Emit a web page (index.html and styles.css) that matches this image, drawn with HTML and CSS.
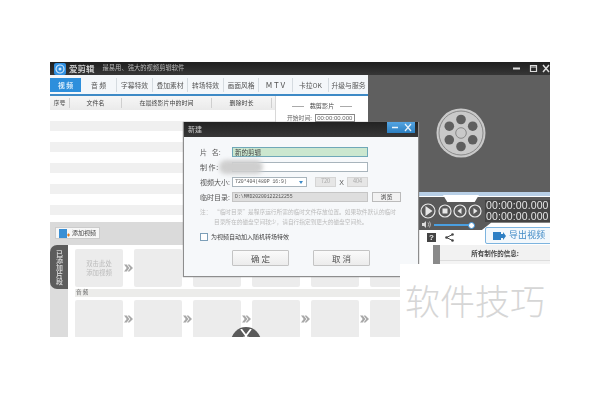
FILE: index.html
```html
<!DOCTYPE html>
<html lang="zh">
<head>
<meta charset="utf-8">
<title>爱剪辑</title>
<link rel="stylesheet" href="styles.css">
</head>
<body>
<svg class="defs" width="0" height="0">
  <symbol id="chev" viewBox="0 0 10 8"><path d="M0 0h3l3 4-3 4H0l3-4zM4 0h2l4 4-4 4H4l3-4z" fill="#a8a8a8"/></symbol>
</svg>
<div class="app">
  <header class="titlebar">
    <svg class="logo" viewBox="0 0 12 12"><rect width="12" height="12" rx="2" fill="#2f8fe0"/><circle cx="6" cy="6" r="4" fill="none" stroke="#cfe6fa" stroke-width="1.2"/><circle cx="6" cy="6" r="1.5" fill="#cfe6fa"/></svg>
    <span class="brand">爱剪辑</span>
    <span class="slogan">最易用、强大的视频剪辑软件</span>
    <span class="winbtns">
      <svg viewBox="0 0 38 9" width="38" height="9"><path d="M1 4.5h7" stroke="#ddd" stroke-width="2"/><path d="M18.500 1.500h6v6h-6zM18.500 3h6" fill="none" stroke="#ddd" stroke-width="1.200"/><path d="M31 1l6 7M37 1l-6 7" stroke="#ddd" stroke-width="1.500"/></svg>
    </span>
  </header>
  <main class="workspace">
    <section class="editor">
      <nav class="tabs">
        <span class="tab active">视 频</span><span class="tab">音 频</span><span class="tab">字幕特效</span><span class="tab">叠加素材</span><span class="tab">转场特效</span><span class="tab">画面风格</span><span class="tab mtv">M T V</span><span class="tab">卡拉OK</span><span class="tab">升级与服务</span>
      </nav>
      <div class="panes">
        <div class="list">
          <div class="listhead"><span class="c1">序号</span><span class="c2">文件名</span><span class="c3">在最终影片中的时间</span><span class="c4">删除时长</span></div>
          <div class="listbody"></div>
        </div>
        <aside class="trim">
          <div class="trimtitle"><i></i>裁剪影片<i></i></div>
          <div class="trimrow">开始时间: <span class="timefield">00:00:00.000</span></div>
        </aside>
      </div>
    </section>
    <section class="preview">
      <svg class="reel" viewBox="0 0 50 50" width="50" height="50">
        <circle cx="25" cy="25" r="24.500" fill="#c9c9c9"/>
        <circle cx="25" cy="25" r="22" fill="none" stroke="#777" stroke-width="0.800"/>
        <g fill="#5f5f5f"><circle cx="25" cy="11.500" r="4.800"/><circle cx="36.700" cy="18.200" r="4.800"/><circle cx="36.700" cy="31.800" r="4.800"/><circle cx="25" cy="38.500" r="4.800"/><circle cx="13.300" cy="31.800" r="4.800"/><circle cx="13.300" cy="18.200" r="4.800"/></g>
        <circle cx="25" cy="25" r="5.300" fill="none" stroke="#777" stroke-width="0.800"/>
      </svg>
    </section>
    <section class="player">
      <div class="band"><span class="notch"></span></div>
      <div class="controls">
        <div class="ctlrow">
          <svg viewBox="0 0 64 18" width="64" height="18" class="ctlicons">
            <g fill="none" stroke="#e8e8e8" stroke-width="1.200"><circle cx="8" cy="9" r="7"/><circle cx="25" cy="9" r="6"/><circle cx="40" cy="9" r="6"/><circle cx="55" cy="9" r="6"/></g>
            <g fill="#e8e8e8"><path d="M5.500 4l7 5-7 5zM22.500 6.500h5v5h-5zM41.500 6v6l-4-3zM53.500 6v6l4-3z"/></g>
          </svg>
          <div class="clock">00:00:00.000<br>00:00:00.000</div>
        </div>
        <div class="volume"><svg viewBox="0 0 9 7" width="9" height="7"><path d="M0 2h2l2-2v7L2 5H0z" fill="#ddd"/><path d="M6 1.500q1.500 2 0 4M7.500 .5q2 3 0 6" fill="none" stroke="#ddd" stroke-width=".7"/></svg><span class="slider"></span></div>
      </div>
      <div class="toolrow">
        <span class="help">?</span>
        <svg viewBox="0 0 9 9" width="9" height="9"><path d="M7.500 1.500L1.500 4.500l6 3" fill="none" stroke="#444" stroke-width="1"/><g fill="#444"><circle cx="7.500" cy="1.500" r="1.300"/><circle cx="1.500" cy="4.500" r="1.300"/><circle cx="7.500" cy="7.500" r="1.300"/></g></svg>
        <span class="export"><svg viewBox="0 0 13 8" width="13" height="8"><rect width="8" height="8" fill="#2d7fc4"/><path d="M8 2h2V0l3 4-3 4V6H8z" fill="#2d7fc4"/></svg>导出视频</span>
      </div>
      <div class="info">
        <div class="infopanel"><div class="infotitle">所有制作的信息:</div></div>
      </div>
    </section>
    <section class="timeline">
      <div class="addbar"><span class="addbtn"><svg viewBox="0 0 11 9" width="11" height="9"><rect width="8" height="9" fill="#3a8fd4"/><path d="M8 6h3M9.500 4.500v3" stroke="#e07b20" stroke-width="1.200"/></svg>添加视频</span></div>
      <div class="clips">
        <div class="cliptab">已添加片段</div>
        <div class="tracks">
          <div class="track">
            <div class="thumb hint">双击此处<br>添加视频</div><svg class="chev"><use href="#chev"/></svg>
            <div class="thumb"></div><svg class="chev"><use href="#chev"/></svg>
            <div class="thumb"></div><svg class="chev"><use href="#chev"/></svg>
            <div class="thumb"></div><svg class="chev"><use href="#chev"/></svg>
            <div class="thumb"></div><svg class="chev"><use href="#chev"/></svg>
            <div class="thumb"></div>
          </div>
          <div class="audiobar">音 频</div>
          <div class="track">
            <div class="thumb"></div><svg class="chev"><use href="#chev"/></svg>
            <div class="thumb"></div><svg class="chev"><use href="#chev"/></svg>
            <div class="thumb"></div><svg class="chev"><use href="#chev"/></svg>
            <div class="thumb"></div><svg class="chev"><use href="#chev"/></svg>
            <div class="thumb"></div><svg class="chev"><use href="#chev"/></svg>
            <div class="thumb"></div>
          </div>
        </div>
        <div class="scissor"><svg viewBox="0 0 14 12" width="14" height="12"><path d="M2 0l6 8M12 0L6 8" stroke="#fff" stroke-width="1.800"/><circle cx="4.500" cy="10" r="1.800" fill="none" stroke="#fff"/><circle cx="9.500" cy="10" r="1.800" fill="none" stroke="#fff"/></svg></div>
      </div>
    </section>
  </main>

  <div class="dialog">
    <div class="dlgtitle"><span>新建</span>
      <span class="dlgbtns"><svg viewBox="0 0 28 11" width="28" height="11"><path d="M5 5.500h6" stroke="#e8f3fb" stroke-width="1.500"/><path d="M18 2l6 7M24 2l-6 7" stroke="#e8f3fb" stroke-width="1.200"/></svg></span>
    </div>
    <div class="dlgbody">
      <div class="field"><label>片 &nbsp; 名:</label><span class="input name">新的剪辑</span></div>
      <div class="field"><label>制 作：</label><span class="input maker"><i class="smudge"></i></span></div>
      <div class="field">
        <label>视频大小:</label>
        <span class="input select">720*404(480P 16:9)<b class="arrow"></b></span>
        <span class="input dim">720</span><span class="times">X</span><span class="input dim">404</span>
      </div>
      <div class="field">
        <label>临时目录:</label>
        <span class="input temp">D:\MMD20200122212255</span>
        <span class="browse">浏览</span>
      </div>
      <p class="note"><span>注：</span><span>“临时目录”是程序运行所需的临时文件存放位置。如果软件默认的临时<br>目录所在的磁盘空间较少，请自行指定到更大的磁盘空间处。</span></p>
      <div class="check"><span class="box"></span>为视频自动加入随机转场特效</div>
      <div class="actions"><span class="btn">确 定</span><span class="btn">取 消</span></div>
    </div>
  </div>
</div>
<div class="watermark">软件技巧</div>
</body>
</html>
```
FILE: styles.css
```css
* { box-sizing: border-box; }
html, body { margin: 0; height: 100%; background: #fff; overflow: hidden; }
body { padding: 62px 0 0 50px; font-family: "Noto Sans CJK SC", "Liberation Sans", sans-serif; color: #444; font-size: 8px; line-height: 1; }
.defs { position: absolute; }
.app { position: relative; width: 500px; height: 275px; background: #fff; overflow: hidden; filter: blur(.45px); }

.titlebar { height: 13px; display: flex; align-items: center; background: linear-gradient(#1f1f1f, #363636); color: #d5d5d5; padding: 0 0 0 4px; }
.logo { width: 12px; height: 12px; margin-right: 3px; }
.brand { font-size: 8.500px; font-weight: 700; margin-right: 8px; color: #ccc; }
.slogan { font-size: 6.300px; color: #bbb; }
.winbtns { margin-left: auto; display: flex; }

.workspace { display: grid; grid-template-columns: 318px 51px 131px; grid-template-rows: 117px 30px 115px; height: 262px; }
.editor { grid-column: 1; grid-row: 1 / 3; display: flex; flex-direction: column; overflow: hidden; }
.preview { grid-column: 2 / 4; grid-row: 1; background: #5f5f5f; display: flex; justify-content: flex-end; padding: 33px 64px 0 0; }
.reel { display: block; }
.player { grid-column: 3; grid-row: 2 / 4; display: flex; flex-direction: column; position: relative; }
.timeline { grid-column: 1 / 3; grid-row: 3; display: flex; flex-direction: column; overflow: hidden; }

.tabs { display: grid; grid-template-columns: 31px 36px 36px 35px 36px 35px 34px 36px 39px; height: 19px; padding: 3px 0 2px; background: #f4f7fa; flex: none; }
.tab { display: flex; align-items: center; justify-content: center; font-size: 6.800px; color: #555; border-right: 1px solid #d5dbe0; white-space: nowrap; }
.tab:last-child, .tab.active { border-right: 0; }
.tab.active { background: #2d8fdc; color: #dceefb; font-weight: 700; }
.tab.mtv { font-size: 8px; }

.panes { flex: 1; display: flex; border-top: 2px solid #3e8ac6; min-height: 0; }
.list { width: 225px; display: flex; flex-direction: column; }
.listhead { height: 14px; flex: none; display: grid; grid-template-columns: 20px 52px 90px 60px; background: linear-gradient(#f6f6f6, #eaeaea); font-size: 6px; }
.listhead span { display: flex; align-items: center; justify-content: center; border-right: 1px solid #cfcfcf; margin: 2px 0; }
.listbody { flex: 1; background: repeating-linear-gradient(#fff 0 11px, #f0f0f0 11px 21px); }
.trim { flex: 1; background: #fff; border-left: 1px solid #d8d8d8; padding-top: 6px; }
.trimtitle { display: flex; align-items: center; justify-content: center; gap: 6px; font-size: 6.200px; height: 9px; }
.trimtitle i { width: 12px; height: 1px; background: #aaa; }
.trimrow { display: flex; align-items: center; gap: 3px; margin: 3px 0 0 11px; font-size: 5.800px; color: #666; }
.timefield { width: 40px; height: 8px; border: 1px solid #888; font: 6px "Liberation Sans", sans-serif; display: flex; align-items: center; justify-content: center; }

.band { height: 5px; background: linear-gradient(#b8cfe6 70%, #fff 70%); position: relative; flex: none; }
.notch { position: absolute; left: 24px; top: 3px; width: 36px; height: 7px; background: #fff; clip-path: polygon(0 0, 100% 0, 88% 100%, 12% 100%); z-index: 1; }
.controls { height: 33px; background: #5a5a5a; clip-path: polygon(0 0, 100% 0, 100% 78%, 55% 78%, 48% 100%, 0 100%); flex: none; padding-top: 3px; }
.ctlrow { display: flex; align-items: flex-start; padding-left: 1px; }
.ctlicons { margin: 2px 0 0 0; flex: none; }
.clock { margin-left: 1px; width: 65px; height: 22px; background: #444; color: #e4e4e4; font: 10.500px/11px "Liberation Sans", sans-serif; letter-spacing: .1px; white-space: nowrap; padding-left: 1px; }
.volume { display: flex; align-items: center; gap: 3px; margin: -1px 0 0 3px; }
.slider { position: relative; width: 39px; height: 2px; background: #4a9fe0; }
.slider::after { content: ""; position: absolute; right: -2px; top: -1.500px; width: 5px; height: 5px; border-radius: 50%; background: #fff; border: 1px solid #3a8fd4; }
.toolrow { height: 15px; display: flex; align-items: center; flex: none; padding-left: 8px; gap: 9px; position: relative; }
.help { width: 9px; height: 9px; background: #444; color: #eee; font: 700 8px/9px "Liberation Sans", sans-serif; text-align: center; }
.export { position: absolute; left: 66px; top: -3px; width: 70px; height: 17px; background: #f3f8fc; border: 1px solid #7db4df; border-radius: 2px; color: #3f8ac6; font-size: 8.800px; letter-spacing: .3px; display: flex; align-items: center; gap: 3px; padding-left: 7px; white-space: nowrap; }
.info { flex: 1; padding-left: 14px; background: #fff; }
.infopanel { height: 100%; border-left: 7px solid #8a8a8a; background: #f4f4f4; }
.infotitle { height: 16px; background: #f2f2f2; border-bottom: 1px solid #ddd; font-size: 6.500px; font-weight: 700; display: flex; align-items: center; justify-content: center; padding-top: 2px; }

.addbar { height: 23px; background: #dadada; flex: none; padding: 5px 0 0 5px; }
.addbtn { display: inline-flex; align-items: center; gap: 2px; height: 12px; width: 45px; background: #f7f7f7; border: 1px solid #ccc; font-size: 6px; padding-left: 3px; white-space: nowrap; }
.clips { flex: 1; display: flex; position: relative; overflow: hidden; }
.cliptab { position: absolute; left: 0; top: 0; width: 18px; height: 44px; background: #5c5c5c; color: #ccc; border-radius: 7px 0 0 7px; writing-mode: vertical-rl; font-size: 7px; font-weight: 700; display: flex; align-items: center; justify-content: center; z-index: 1; }
.tracks { margin-left: 18px; flex: 1; padding: 4px 0 0 7px; background: #fff; min-width: 0; position: relative; }
.clips::before { content: ""; position: absolute; left: 0; top: 0; bottom: 0; width: 18px; background: #dcdcdc; }
.track { display: flex; align-items: center; height: 38px; }
.thumb { width: 48px; height: 38px; flex: none; background: #ececec; border-radius: 2px; display: flex; align-items: center; justify-content: center; text-align: center; color: #bbb; font-size: 6.400px; line-height: 9.500px; }
.chev { width: 9px; height: 8px; margin: 0 1px; flex: none; }
.audiobar { height: 8px; margin: 2px 0 3px; background: #ececea; font-size: 5.500px; color: #666; padding-left: 1px; display: flex; align-items: center; }
.scissor { position: absolute; left: 181px; top: 82px; width: 30px; height: 30px; border-radius: 50%; background: #5a5a5a; display: flex; justify-content: center; padding-top: 2px; }

.dialog { position: absolute; left: 133px; top: 60px; width: 236px; height: 155px; background: #f6f8fa; border: 1px solid #8d8d8d; border-top: 0; box-shadow: 0 0 1px #777; display: flex; flex-direction: column; }
.dlgtitle { height: 15px; background: linear-gradient(#222, #383838); color: #ccc; font-size: 7px; display: flex; align-items: center; padding-left: 4px; flex: none; }
.dlgbtns { margin-left: auto; margin-right: 3px; align-self: flex-start; width: 28px; height: 11px; background: linear-gradient(#54a4e2, #2c7fc0); display: flex; }
.dlgbody { padding: 10px 0 0 16px; flex: 1; }
.field { display: flex; align-items: center; height: 10px; margin-bottom: 5px; }
.field label { width: 32px; flex: none; font-size: 7px; color: #555; white-space: nowrap; }
.input { height: 10px; display: flex; align-items: center; border: 1px solid #a8b4bc; background: #fff; font-size: 6.500px; padding-left: 2px; white-space: nowrap; }
.name { width: 136px; background: #cbe7cf; border-color: #6fa8b8; color: #444; }
.maker { width: 136px; position: relative; }
.smudge { position: absolute; left: -14px; top: -3px; width: 44px; height: 14px; background: #cfcfcf; border-radius: 7px; filter: blur(2px); }
.select { width: 75px; margin-right: 8px; position: relative; font-family: "Liberation Mono", monospace; font-size: 4.800px; color: #555; }
.arrow { position: absolute; right: 3px; top: 3px; border: 2.500px solid transparent; border-top: 3px solid #3c8ac8; }
.dim { width: 21px; background: #e6e6e6; border-color: #d5d5d5; color: #aaa; font-size: 5.500px; justify-content: center; padding: 0; }
.times { width: 11px; text-align: center; font: 7px "Liberation Sans", sans-serif; color: #555; }
.temp { width: 136px; background: #dedede; border-color: #c5c5c5; color: #555; font-family: "Liberation Mono", monospace; font-size: 4.800px; }
.browse { width: 29px; height: 10px; margin-left: 4px; background: #f2f2f2; border: 1px solid #bbb; display: flex; align-items: center; justify-content: center; font-size: 6px; }
.note { margin: 0; display: flex; font-size: 5.700px; line-height: 10px; color: #bcbcbc; white-space: nowrap; }
.note span:first-child { width: 14px; flex: none; }
.check { display: flex; align-items: center; gap: 3px; margin-top: 6px; font-size: 6px; color: #444; white-space: nowrap; height: 8px; }
.box { width: 8px; height: 8px; border: 1px solid #7d9fb8; background: #fff; }
.actions { display: flex; gap: 24px; margin: 9px 0 0 32px; }
.btn { width: 57px; height: 16px; background: linear-gradient(#fafafa, #ececec); border: 1px solid #c4c4c4; border-radius: 1px; display: flex; align-items: center; justify-content: center; font-size: 8.500px; color: #555; }

.watermark { position: absolute; left: 400px; top: 264px; width: 200px; height: 136px; background: #fff; color: #d6d6d6; font-family: "Noto Sans CJK SC", sans-serif; font-weight: 300; font-size: 35px; line-height: 35px; padding: 18px 0 0 5px; white-space: nowrap; }
```
